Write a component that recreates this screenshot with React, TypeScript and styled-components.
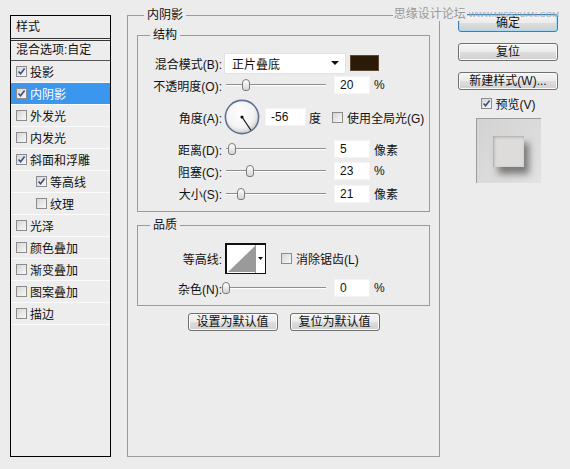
import React from 'react';
import styled, { createGlobalStyle } from 'styled-components';

const GlobalStyle = createGlobalStyle`
  html, body {
    margin: 0;
    padding: 0;
    background: #ececec;
  }
  body {
    font-family: "Liberation Sans", "Noto Sans CJK SC", sans-serif;
    font-size: 12px;
    color: #111;
  }
`;

const styleItems = [
  { text: '投影', checked: true },
  { text: '内阴影', checked: true, active: true },
  { text: '外发光' },
  { text: '内发光' },
  { text: '斜面和浮雕', checked: true },
  { text: '等高线', checked: true, sub: true },
  { text: '纹理', sub: true },
  { text: '光泽' },
  { text: '颜色叠加' },
  { text: '渐变叠加' },
  { text: '图案叠加' },
  { text: '描边' },
];

const Dialog = styled.div`
  position: relative;
  width: 570px;
  height: 469px;
  box-sizing: border-box;
  padding: 8px 0 0 10px;
  display: flex;
  align-items: flex-start;
  overflow: hidden;
`;

const Watermark = styled.div`
  position: absolute;
  top: 8px;
  right: 11px;
  display: flex;
  align-items: flex-start;
  gap: 2px;
  color: #9a9a9a;
  font-size: 12px;
  line-height: 13px;
`;

const WatermarkName = styled.span`
  padding: 0 1px;
  background: #ececec;
`;

const WatermarkUrl = styled.span`
  margin-top: 2px;
  font-size: 8px;
  line-height: 9px;
  color: #9aa6b0;
  letter-spacing: 0.2px;
`;

const StylePanel = styled.div`
  margin-top: 7px;
  width: 101px;
  height: 442px;
  box-sizing: border-box;
  border: 1px solid #000;
  background: #ededed;
`;

const PanelHeader = styled.div`
  height: 22px;
  line-height: 22px;
  padding-left: 5px;
  border-bottom: 3px double #333;
`;

const BlendOptions = styled.div`
  height: 19px;
  line-height: 19px;
  padding-left: 5px;
  border-bottom: 1px solid #555;
`;

const StyleRow = styled.div<{ $active?: boolean; $sub?: boolean }>`
  height: 21px;
  display: flex;
  align-items: center;
  gap: 3px;
  padding-left: ${p => (p.$sub ? 25 : 5)}px;
  border-bottom: 1px solid #fbfbfb;
  background: ${p => (p.$active ? '#3b96ee' : 'transparent')};
  color: ${p => (p.$active ? '#fff' : '#111')};
`;

const Box = styled.span`
  flex-shrink: 0;
  width: 11px;
  height: 11px;
  box-sizing: border-box;
  border: 1px solid #8c8c8c;
  background: linear-gradient(135deg, #d6d6d6, #f8f8f8);
  display: inline-flex;
`;

const Check = ({ checked }: { checked?: boolean }) => (
  <Box>
    {checked && (
      <svg width="9" height="9" viewBox="0 0 9 9">
        <path d="M1.5 4.5 L3.6 6.8 L7.6 1.6" fill="none" stroke="#3a4f86" strokeWidth="1.6" />
      </svg>
    )}
  </Box>
);

const Group = styled.fieldset`
  margin: 0 0 0 16px;
  width: 313px;
  height: 449px;
  box-sizing: border-box;
  min-width: 0;
  padding: 0 9px;
  border: 1px solid #9a9a9a;
`;

const Legend = styled.legend<{ $offset: number }>`
  margin-left: ${p => p.$offset}px;
  padding: 0 3px;
  line-height: 14px;
`;

const SubGroup = styled.fieldset<{ $top: number }>`
  margin: 6px 0 0;
  min-width: 0;
  padding: ${p => p.$top}px 0 6px 10px;
  border: 1px solid #9a9a9a;
`;

const Row = styled.div<{ $h: number; $mt?: number }>`
  display: flex;
  align-items: center;
  height: ${p => p.$h}px;
  margin-top: ${p => p.$mt ?? 0}px;
`;

const Label = styled.span`
  width: 74px;
  flex-shrink: 0;
  text-align: right;
  white-space: nowrap;
`;

const Select = styled.div`
  margin-left: 2px;
  width: 122px;
  height: 21px;
  box-sizing: border-box;
  border: 1px solid #e2e2e2;
  background: #fff;
  display: flex;
  align-items: center;
  justify-content: space-between;
  padding: 0 6px 0 7px;
`;

const Arrow = styled.span`
  width: 0;
  height: 0;
  border-left: 4px solid transparent;
  border-right: 4px solid transparent;
  border-top: 4px solid #111;
`;

const Swatch = styled.div`
  margin-left: 4px;
  width: 29px;
  height: 16px;
  box-sizing: border-box;
  border: 1px solid #5a4a38;
  background: #2b1a05;
`;

const Track = styled.div`
  position: relative;
  margin: 0 8px 0 4px;
  width: 100px;
  height: 12px;
  flex-shrink: 0;
  &::before {
    content: '';
    position: absolute;
    left: 0;
    right: 0;
    top: 5px;
    height: 1px;
    background: #8e8e8e;
    box-shadow: 0 1px 0 #fff;
  }
`;

const Thumb = styled.span`
  position: absolute;
  top: 0;
  width: 8px;
  height: 12px;
  box-sizing: border-box;
  border: 1px solid #7c7c7c;
  border-radius: 4px 4px 3px 3px;
  background: linear-gradient(#ffffff, #d4d4d4);
`;

const Slider = ({ pos }: { pos: number }) => (
  <Track>
    <Thumb style={{ left: pos - 4 }} />
  </Track>
);

const Field = styled.div<{ $w?: number; $ml?: number }>`
  margin-left: ${p => p.$ml ?? 0}px;
  width: ${p => p.$w ?? 36}px;
  height: 18px;
  box-sizing: border-box;
  background: #fff;
  border: 1px solid #f4f4f4;
  padding-left: 5px;
  line-height: 16px;
  flex-shrink: 0;
`;

const Unit = styled.span<{ $ml?: number }>`
  margin-left: ${p => p.$ml ?? 4}px;
  white-space: nowrap;
`;

const CheckLabel = styled.div<{ $ml?: number }>`
  margin-left: ${p => p.$ml ?? 0}px;
  display: flex;
  align-items: center;
  gap: 4px;
  white-space: nowrap;
`;

const DialWrap = styled.div`
  margin-left: 2px;
  width: 36px;
  height: 36px;
  flex-shrink: 0;
`;

const Dial = ({ angle }: { angle: number }) => {
  const r = (angle * Math.PI) / 180;
  const x = 18 + Math.cos(r) * 16;
  const y = 18 - Math.sin(r) * 16;
  return (
    <DialWrap>
      <svg width="36" height="36" viewBox="0 0 36 36">
        <defs>
          <radialGradient id="dialFill" cx="45%" cy="40%" r="60%">
            <stop offset="0%" stopColor="#ffffff" />
            <stop offset="70%" stopColor="#f3f3f3" />
            <stop offset="100%" stopColor="#cfcfcf" />
          </radialGradient>
        </defs>
        <circle cx="18" cy="18" r="16.6" fill="url(#dialFill)" stroke="#5f7391" strokeWidth="1.6" />
        <line x1="18" y1="18" x2={x} y2={y} stroke="#111" strokeWidth="1.2" />
        <circle cx="18" cy="18" r="1.6" fill="#111" />
      </svg>
    </DialWrap>
  );
};

const ContourBox = styled.div`
  margin-left: 3px;
  width: 41px;
  height: 31px;
  box-sizing: border-box;
  border: 2px solid #111;
  border-right-width: 1px;
  border-bottom-width: 1px;
  background: #fff;
  display: flex;
`;

const ContourPicker = () => (
  <ContourBox>
    <svg width="38" height="28" viewBox="0 0 38 28">
      <polygon points="1,27 28,1 28,27" fill="#9a9a9a" />
      <line x1="28.5" y1="0" x2="28.5" y2="28" stroke="#9a9a9a" />
      <polygon points="31,12 36,12 33.5,15" fill="#111" />
    </svg>
  </ContourBox>
);

const ButtonRow = styled.div`
  display: flex;
  justify-content: center;
  gap: 12px;
  margin-top: 7px;
`;

const Button = styled.button<{ $primary?: boolean; $w?: number }>`
  width: ${p => p.$w ?? 100}px;
  height: 18px;
  padding: 0;
  font: inherit;
  font-size: 12px;
  line-height: 14px;
  color: #111;
  border: 1px solid ${p => (p.$primary ? '#3c7fb1' : '#707070')};
  border-radius: 3px;
  background: linear-gradient(#f4f4f4 0%, #ececec 50%, #dedede 51%, #d0d0d0 100%);
  box-shadow: inset 0 0 0 1px ${p => (p.$primary ? '#a6dcf7' : '#fbfbfb')};
`;

const Side = styled.div`
  margin-left: 18px;
  width: 100px;
  padding-top: 6px;
  display: flex;
  flex-direction: column;
  align-items: center;
  gap: 11px;
`;

const PreviewToggle = styled(CheckLabel)`
  margin-top: -4px;
  height: 13px;
`;

const PreviewBox = styled.div`
  margin-top: -3px;
  width: 65px;
  height: 65px;
  box-sizing: border-box;
  border-top: 1px solid #9c9c9c;
  border-left: 1px solid #9c9c9c;
  background: linear-gradient(135deg, #d2d2d2, #e2e2e2);
  display: flex;
  padding: 17px 0 0 16px;
`;

const PreviewTile = styled.div`
  width: 31px;
  height: 31px;
  background: #dddcda;
  box-shadow: inset 1px 1px 3px rgba(0, 0, 0, 0.25), 5px 7px 7px rgba(0, 0, 0, 0.45);
`;

export default function App() {
  return (
    <Dialog>
      <GlobalStyle />
      <StylePanel>
        <PanelHeader>样式</PanelHeader>
        <BlendOptions>混合选项:自定</BlendOptions>
        {styleItems.map(item => (
          <StyleRow key={item.text} $active={item.active} $sub={item.sub}>
            <Check checked={item.checked} />
            {item.text}
          </StyleRow>
        ))}
      </StylePanel>

      <Group>
        <Legend $offset={7}>内阴影</Legend>
        <SubGroup $top={10}>
          <Legend $offset={2}>结构</Legend>
          <Row $h={22}>
            <Label>混合模式(B):</Label>
            <Select>
              正片叠底
              <Arrow />
            </Select>
            <Swatch />
          </Row>
          <Row $h={22}>
            <Label>不透明度(O):</Label>
            <Slider pos={20} />
            <Field>20</Field>
            <Unit>%</Unit>
          </Row>
          <Row $h={42}>
            <Label>角度(A):</Label>
            <Dial angle={-56} />
            <Field $w={41} $ml={5}>-56</Field>
            <Unit $ml={3}>度</Unit>
            <CheckLabel $ml={11}>
              <Check />
              使用全局光(G)
            </CheckLabel>
          </Row>
          <Row $h={22}>
            <Label>距离(D):</Label>
            <Slider pos={6} />
            <Field>5</Field>
            <Unit>像素</Unit>
          </Row>
          <Row $h={22}>
            <Label>阻塞(C):</Label>
            <Slider pos={24} />
            <Field>23</Field>
            <Unit>%</Unit>
          </Row>
          <Row $h={23}>
            <Label>大小(S):</Label>
            <Slider pos={15} />
            <Field>21</Field>
            <Unit>像素</Unit>
          </Row>
        </SubGroup>

        <SubGroup $top={11}>
          <Legend $offset={2}>品质</Legend>
          <Row $h={31}>
            <Label>等高线:</Label>
            <ContourPicker />
            <CheckLabel $ml={15}>
              <Check />
              消除锯齿(L)
            </CheckLabel>
          </Row>
          <Row $h={22} $mt={3}>
            <Label>杂色(N):</Label>
            <Slider pos={0} />
            <Field>0</Field>
            <Unit>%</Unit>
          </Row>
        </SubGroup>

        <ButtonRow>
          <Button $w={90}>设置为默认值</Button>
          <Button $w={90}>复位为默认值</Button>
        </ButtonRow>
      </Group>

      <Side>
        <Button $primary>确定</Button>
        <Button>复位</Button>
        <Button>新建样式(W)...</Button>
        <PreviewToggle>
          <Check checked />
          预览(V)
        </PreviewToggle>
        <PreviewBox>
          <PreviewTile />
        </PreviewBox>
      </Side>

      <Watermark>
        <WatermarkName>思缘设计论坛</WatermarkName>
        <WatermarkUrl>WWW.MISSYUAN.COM</WatermarkUrl>
      </Watermark>
    </Dialog>
  );
}
